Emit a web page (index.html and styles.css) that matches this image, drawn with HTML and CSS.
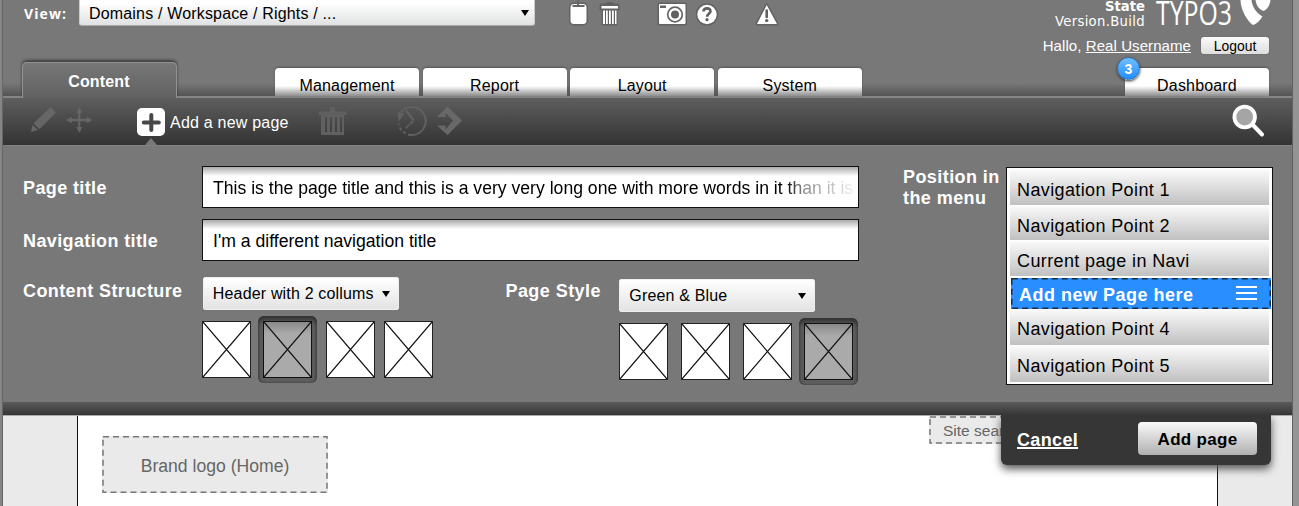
FILE: index.html
```html
<!DOCTYPE html>
<html lang="en">
<head>
<meta charset="utf-8">
<title>Add a new page</title>
<link rel="stylesheet" href="styles.css">
</head>
<body>
<div class="window">
  <header class="header">
    <div class="topbar">
      <span class="view-label">View:</span>
      <div class="select select-view"><span>Domains / Workspace / Rights / ...</span><i class="arrow"></i></div>
      <svg class="top-icons" width="230" height="32" viewBox="560 0 230 32">
        <g fill="#fff" stroke="#626262" stroke-width="3" paint-order="stroke" stroke-linejoin="round">
          <rect x="570.5" y="4" width="16" height="20" rx="3.5"/>
          <path d="M601 5h6V3.500h5V5h6v4h-2v15h-13V9h-2z" fill="#626262"/>
          <rect x="659" y="4" width="26.500" height="20" rx="1"/>
          <circle cx="707" cy="14.500" r="9.700"/>
          <path d="M766.700 5L777 24H757z"/>
        </g>
        <path d="M572.500 5h12v2h-12zM577 0h2v5h-2z" fill="#666"/>
        <path d="M601.500 6h16.500v2.500h-16.500zM603 10.500h2V24h-2zM606 10.500h1.800V24H606zM609 10.500h1.800V24H609zM612 10.500h1.800V24H612zM615 10.500h1.500V24H615z" fill="#fff"/>
        <path d="M660 5.500h6V8h-6z" fill="#666"/>
        <circle cx="675" cy="14.500" r="7.300" fill="#fff" stroke="#666" stroke-width="1.700"/>
        <circle cx="675" cy="14.500" r="4" fill="#606060"/>
        <path d="M703.500 11.600C703.500 7.400 710.800 7.400 710.500 11.300C710.300 13.600 707.300 13.500 707.200 16.800" fill="none" stroke="#606060" stroke-width="2.600"/>
        <circle cx="707" cy="19.700" r="1.600" fill="#606060"/>
        <path d="M766.700 10.500v6.500" stroke="#606060" stroke-width="2.600" stroke-linecap="round"/>
        <circle cx="766.700" cy="20.600" r="1.700" fill="#606060"/>
      </svg>
      <div class="version"><b>State</b><span>Version.Build</span></div>
      <svg class="brand" width="120" height="32" viewBox="1151 0 120 32">
        <text class="brand-text" x="1156" y="25" textLength="76" lengthAdjust="spacingAndGlyphs">TYPO3</text>
        <g fill="#fff">
          <path d="M1240.500 0C1240.500 9 1247 21 1253 25C1257 24 1260 20 1262.500 16.500C1256 13 1252 6 1251.500 0z"/>
          <path d="M1255.500 0C1256 5 1259 9.500 1263.500 11C1267.500 9 1270 5 1270.500 0z"/>
        </g>
      </svg>
    </div>
    <div class="userbar"><span>Hallo, <u>Real Username</u></span><button class="logout">Logout</button></div>
    <nav class="tabs">
      <a class="tab active">Content</a>
      <a class="tab">Management</a>
      <a class="tab">Report</a>
      <a class="tab">Layout</a>
      <a class="tab">System</a>
      <a class="tab dashboard">Dashboard<span class="badge">3</span></a>
    </nav>
  </header>

  <div class="toolbar">
    <svg class="tools-edit" width="134" height="47" viewBox="3 98 134 47">
      <g fill="#666">
        <path d="M50.500 107l5.500 5.500-16.500 16.500-6-5.500zM32.500 125l5.500 5-7 2z"/>
        <path d="M79.300 107l3 6h-2v5.800h6.500v-2l5.700 3.200-5.700 3.200v-2h-6.500v5.800h2l-3 6-3-6h2v-5.800h-6.500v2l-5.700-3.200 5.700-3.200v2h6.500v-5.800h-2z"/>
      </g>
    </svg>
    <a class="add">
      <span class="plus"><svg width="28" height="28" viewBox="0 0 28 28"><path d="M14.300 7v15M6.800 14.500h15" stroke="#484848" stroke-width="4" stroke-linecap="round"/></svg></span>
      <span>Add a new page</span>
      <i class="pointer"></i>
    </a>
    <svg class="tools-page" width="170" height="47" viewBox="305 98 170 47">
      <path d="M319 111.500h11V107h5v4.500h11.500V115H319z" fill="#606060"/>
      <path d="M321 115h23v20h-23zM325 117v15h2v-15zM330 117v15h2v-15zM335 117v15h2v-15zM340 117v15h2v-15z" fill="#606060" fill-rule="evenodd"/>
      <g fill="none" stroke="#606060">
        <path d="M401 112A14 14 0 1 1 411 135" stroke-width="2"/>
        <path d="M411 135A14 14 0 0 1 398.500 124" stroke-width="2" stroke-dasharray="3 2.500"/>
        <path d="M406 110.500l7.500 9.500" stroke-width="2.500"/>
        <path d="M413.500 120.500l-8.500 8.500" stroke-width="1.700" stroke-dasharray="5 1"/>
      </g>
      <path d="M397.500 112l7 1.500-6 8z" fill="#606060"/>
      <path d="M447.500 106.500l14.500 14-14.500 14.500-10.500-9.500h8.500v4l7.500-9-7.500-7.500v4H437z" fill="#686868"/>
    </svg>
    <svg class="search" width="40" height="47" viewBox="1228 98 40 47">
      <path d="M1252 124l10 10.500" stroke="#fff" stroke-width="4" stroke-linecap="round"/>
      <circle cx="1244.700" cy="117" r="10.300" fill="#a5a5a5" stroke="#fff" stroke-width="3.800"/>
    </svg>
  </div>

  <main class="form">
    <section class="fields">
      <div class="field"><label>Page title</label><div class="input"><span class="fade">This is the page title and this is a very very long one with more words in it than it is</span></div></div>
      <div class="field"><label>Navigation title</label><div class="input"><span>I'm a different navigation title</span></div></div>
      <div class="pickers">
        <label class="structure-label">Content Structure</label>
        <div class="picker">
          <div class="select select-small"><span>Header with 2 collums</span><i class="arrow"></i></div>
          <div class="thumbs thumbs-structure">
            <svg class="thumb" viewBox="0 0 47 55"><path d="M0 0l47 55M47 0L0 55"/></svg>
            <span class="chosen"><svg class="thumb" viewBox="0 0 47 55"><path d="M0 0l47 55M47 0L0 55"/></svg></span>
            <svg class="thumb" viewBox="0 0 47 55"><path d="M0 0l47 55M47 0L0 55"/></svg>
            <svg class="thumb last" viewBox="0 0 47 55"><path d="M0 0l47 55M47 0L0 55"/></svg>
          </div>
        </div>
        <label class="style-label">Page Style</label>
        <div class="picker picker-style">
          <div class="select select-small"><span>Green &amp; Blue</span><i class="arrow"></i></div>
          <div class="thumbs thumbs-style">
            <svg class="thumb" viewBox="0 0 47 55"><path d="M0 0l47 55M47 0L0 55"/></svg>
            <svg class="thumb" viewBox="0 0 47 55"><path d="M0 0l47 55M47 0L0 55"/></svg>
            <svg class="thumb" viewBox="0 0 47 55"><path d="M0 0l47 55M47 0L0 55"/></svg>
            <span class="chosen"><svg class="thumb" viewBox="0 0 47 55"><path d="M0 0l47 55M47 0L0 55"/></svg></span>
          </div>
        </div>
      </div>
    </section>
    <label class="position-label">Position in<br>the menu</label>
    <ul class="menu">
      <li>Navigation Point 1</li>
      <li>Navigation Point 2</li>
      <li>Current page in Navi</li>
      <li class="new"><svg class="dashes" width="260" height="31"><rect x=".75" y=".75" width="258.500" height="29.500"/></svg><span>Add new Page here</span><svg class="grip" width="21" height="14"><path d="M0 1h21M0 7h21M0 13h21"/></svg></li>
      <li class="tall">Navigation Point 4</li>
      <li class="tall">Navigation Point 5</li>
    </ul>
  </main>

  <div class="divider"></div>

  <div class="preview">
    <div class="page">
      <div class="brand-box"><svg class="dashes" width="226" height="57"><rect x="1" y=".75" width="224" height="55.500"/></svg>Brand logo (Home)</div>
      <div class="site-search"><svg class="dashes" width="120" height="28"><rect x="1" y="1" width="118" height="26"/></svg>Site search</div>
    </div>
    <div class="actions"><a class="cancel">Cancel</a><button class="submit">Add page</button></div>
  </div>
</div>
</body>
</html>
```

FILE: styles.css
```css
* { box-sizing: border-box; }
body {
  margin: 0;
  height: 506px;
  overflow: hidden;
  background: linear-gradient(90deg, #858585 0 2px, #666 2px 3px, #949494 3px);
  font-family: "Liberation Sans", Arial, sans-serif;
  color: #fff;
}
.window {
  width: 1290px;
  height: 506px;
  margin-left: 3px;
  border-right: 1px solid #606060;
  background: #787878;
  display: flex;
  flex-direction: column;
}
svg { display: block; flex: none; }

/* Header */
.header {
  height: 96px;
  flex: none;
  display: flex;
  flex-direction: column;
  background: linear-gradient(#787878 83px, #545454 96px);
}
.topbar { height: 32px; display: flex; }
.view-label {
  width: 76px;
  padding: 5px 0 0 21px;
  font: bold 14px/17px "Open Sans", sans-serif;
  letter-spacing: 1.1px;
}
.select {
  display: flex;
  align-items: center;
  justify-content: space-between;
  color: #000;
  font-size: 16px;
  letter-spacing: .17px;
  white-space: nowrap;
  background: linear-gradient(#fff, #e3e3e3);
  border: 1px solid #eee;
  border-radius: 2px;
}
.arrow { border: 4.5px solid transparent; border-top: 6px solid #000; border-bottom: 0; }
.select-view {
  width: 456px;
  height: 34px;
  margin-top: -8px;
  padding: 9px 5px 0 9px;
  line-height: 18px;
  align-items: flex-start;
  background: linear-gradient(#fff 10px, #e0e1e2);
  border-color: #ccc;
  border-bottom-color: #aaa;
  border-radius: 3px;
}
.select-view span { padding-top: 3px; }
.select-view .arrow { margin-top: 8px; }
.top-icons { margin-left: 25px; }
.version {
  width: 127px;
  margin-left: 228px;
  display: flex;
  flex-direction: column;
  align-items: flex-end;
  font: 13.200px/15px "DejaVu Sans", sans-serif;
  letter-spacing: .33px;
}
.version b { margin-top: -1px; letter-spacing: 0; }
.brand { margin-left: 6px; overflow: visible; }
.brand-text { font: 400 32px "Open Sans", sans-serif; fill: #fff; }
.userbar {
  height: 30px;
  padding: 5px 23px 0 0;
  display: flex;
  align-items: flex-start;
  justify-content: flex-end;
  gap: 10px;
  font-size: 15px;
  line-height: 18px;
  letter-spacing: .08px;
}
.logout {
  width: 68px;
  height: 17px;
  padding: 1px 0 0;
  border: 0;
  border-radius: 3px;
  background: linear-gradient(#fafafa, #dedede);
  box-shadow: 0 0 1px #333;
  font: 13.900px/17px "Liberation Sans", sans-serif;
}
.tabs { height: 34px; padding: 0 23px 0 19px; display: flex; align-items: flex-end; }
.tab {
  position: relative;
  width: 144px;
  height: 28px;
  margin-right: 3.600px;
  border-radius: 4px 4px 0 0;
  background: linear-gradient(#fff 18px, #8d8d8d);
  box-shadow: 0 -1px 2px #555;
  color: #000;
  font-size: 16px;
  line-height: 35px;
  letter-spacing: .17px;
  text-align: center;
}
.tab.active {
  z-index: 1;
  width: 155px;
  height: 36px;
  margin-right: 98px;
  margin-bottom: -2px;
  padding-right: 1px;
  border: 1px solid #929292;
  border-bottom: 0;
  border-radius: 5px 5px 0 0;
  background: linear-gradient(#777, #616161);
  box-shadow: 0 -2px 3px #3d3d3d;
  color: #fff;
  font-weight: bold;
  line-height: 37px;
  clip-path: inset(-6px -6px 0 -6px);
}
.tab.dashboard { margin-left: auto; margin-right: 0; }
.badge {
  position: absolute;
  left: -8px;
  top: -11px;
  width: 23px;
  height: 23px;
  border-radius: 50%;
  background: linear-gradient(#70c0ff, #218eff);
  border: 1px solid #2c6fae;
  box-shadow: 0 1px 3px #333;
  color: #fff;
  font-weight: bold;
  font-size: 14px;
  line-height: 23px;
}

/* Toolbar */
.toolbar {
  height: 49px;
  flex: none;
  display: flex;
  border-top: 2px solid #858585;
  background: linear-gradient(#5e5e5e, #333);
}
.add {
  position: relative;
  width: 168px;
  display: flex;
  align-items: flex-start;
  gap: 5px;
  padding-top: 10px;
  font-size: 16px;
  line-height: 29px;
  letter-spacing: .22px;
  white-space: nowrap;
}
.plus { width: 28px; height: 28px; border-radius: 5px; background: #fff; }
.pointer {
  position: absolute;
  left: 8px;
  bottom: 0;
  border: 6.500px solid transparent;
  border-top: 0;
  border-bottom: 7px solid #787878;
}
.search { margin-left: auto; margin-right: 24px; }

/* Form */
.form {
  height: 257px;
  flex: none;
  padding: 20px 19px 0 20px;
  display: flex;
  align-items: flex-start;
  border-top: 1px solid #828282;
}
.fields { width: 836px; margin-right: 44px; }
label { font-weight: bold; font-size: 18px; line-height: 21px; letter-spacing: .38px; white-space: nowrap; }
.field { display: flex; align-items: center; height: 42px; margin-bottom: 11px; }
.field label { width: 179px; padding-top: 2px; }
.input {
  width: 657px;
  height: 42px;
  padding-left: 10px;
  border: 1.500px solid #111;
  background: linear-gradient(#aaa, #fff 9px);
  color: #000;
  font-size: 17.620px;
  line-height: 42px;
  white-space: nowrap;
  overflow: hidden;
}
.fade {
  background: linear-gradient(90deg, #000 573px, #888 590px, #eee 640px);
  background-clip: text;
  color: transparent;
}
.pickers { display: flex; align-items: flex-start; margin-top: 16px; }
.structure-label { width: 179px; padding-top: 4px; }
.style-label { width: 114px; padding: 4px 0 0 1px; letter-spacing: .45px; }
.picker { width: 303px; }
.picker-style { width: 241px; padding-top: 2px; }
.select-small { width: 196px; height: 33px; margin-left: 1px; padding: 0 8px 0 9px; }
.thumbs { display: flex; margin-top: 11px; }
.thumb { width: 49px; height: 57px; background: #fff; border: 1px solid #222; fill: none; stroke: #111; stroke-width: 1.200; }
.chosen {
  width: 59px;
  height: 67px;
  margin: -5px 0 0;
  padding: 5px;
  border-radius: 6px;
  background: #5d5d5d;
  box-shadow: inset 0 4px 4px #333, inset 0 0 2px #333;
}
.chosen .thumb { background: linear-gradient(#8a8a8a, #aaa 12px); border-color: #111; }
.thumbs-structure { padding-left: .5px; }
.thumbs-structure .chosen { margin-left: 7px; margin-right: 9px; }
.thumbs-structure .last { margin-left: 9px; }
.thumbs-style { padding-left: 1px; }
.thumbs-style .thumb + .thumb { margin-left: 13px; }
.thumbs-style .chosen { margin-left: 7px; }

.position-label { width: 103px; padding-top: 1px; letter-spacing: .43px; }
.menu {
  width: 267px;
  height: 218px;
  margin: 1px 0 0;
  padding: 2px 3px 0;
  list-style: none;
  background: #fff;
  border: 1.500px solid #111;
  color: #000;
  font-size: 18px;
  letter-spacing: .38px;
}
.menu li {
  height: 34.500px;
  margin-bottom: 1px;
  padding-left: 7px;
  line-height: 40px;
  background: linear-gradient(#fafafa, #c0c0c0);
}
.menu .new {
  position: relative;
  width: 260px;
  height: 31px;
  margin: 2px 0 0 1px;
  padding: 0 14px 0 8px;
  display: flex;
  justify-content: space-between;
  background: #298eff;
  color: #fff;
  font-weight: bold;
  letter-spacing: .5px;
  line-height: 34px;
}
.dashes { position: absolute; inset: 0; fill: none; stroke: #1d2d40; stroke-width: 1.500; stroke-dasharray: 6 4; }
.grip { margin-top: 8px; stroke: #fff; stroke-width: 2; }
.menu .tall { height: 36px; }

/* Preview below the form */
.divider { height: 13px; flex: none; background: linear-gradient(#5b5b5b, #363636); }
.preview { position: relative; flex: 1; padding: 0 74px; background: #eaeaea; border-top: 1px solid #aaa; }
.page {
  height: 100%;
  padding: 20px 0 0 24px;
  display: flex;
  align-items: flex-start;
  background: #fff;
  border: solid #111;
  border-width: 0 1px;
  color: #666;
}
.brand-box, .site-search { position: relative; background: #eaeaea; }
.brand-box { width: 226px; height: 57px; text-align: center; font-size: 17.600px; line-height: 60px; }
.brand-box .dashes, .site-search .dashes { stroke: #777; }
.site-search { width: 120px; height: 28px; margin: -20px 0 0 601px; padding-left: 14px; font-size: 15.500px; line-height: 30px; }
.actions {
  position: absolute;
  right: 21px;
  top: -1px;
  width: 270px;
  height: 50px;
  padding: 7px 14px 0 16px;
  display: flex;
  align-items: flex-start;
  justify-content: space-between;
  border-radius: 0 0 6px 6px;
  background: #363636;
  box-shadow: 0 4px 8px #555;
  clip-path: inset(0 -20px -20px -20px);
}
.cancel { padding-top: 8px; font-size: 18px; line-height: 21px; font-weight: bold; letter-spacing: .35px; text-decoration: underline; text-decoration-thickness: 2px; }
.submit {
  width: 119px;
  height: 33px;
  padding: 2px 0 0;
  border: 0;
  border-radius: 4px;
  background: linear-gradient(#fafafa, #b0b0b0);
  font: bold 17px/20px "Liberation Sans", sans-serif;
  letter-spacing: .3px;
}
```
